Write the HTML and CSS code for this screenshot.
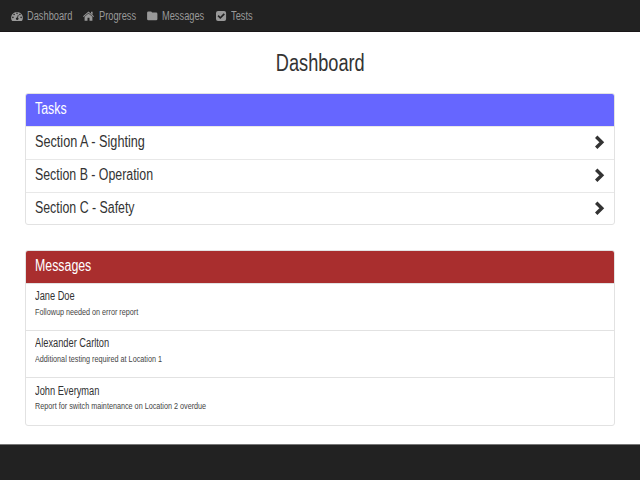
FILE: index.html
```html
<!DOCTYPE html>
<html lang="en">
<head>
<meta charset="utf-8">
<title>Dashboard</title>
<link rel="stylesheet" href="styles.css">
</head>
<body>
<nav class="navbar">
  <a class="nav-item nav-dashboard"><svg class="icon" viewBox="0 0 12 12"><path fill-rule="evenodd" d="M.8 10.6A5.9 5.9 0 1 1 11.2 10.6Q11 10.9 10.6 10.9H1.4Q1 10.9.8 10.6zM1.1 7.4a.8.8 0 1 0 1.6 0a.8.8 0 1 0-1.6 0M2.3 4.5a.8.8 0 1 0 1.6 0a.8.8 0 1 0-1.6 0M5.2 3.2a.8.8 0 1 0 1.6 0a.8.8 0 1 0-1.6 0M8.1 4.5a.8.8 0 1 0 1.6 0a.8.8 0 1 0-1.6 0M9.3 7.4a.8.8 0 1 0 1.6 0a.8.8 0 1 0-1.6 0M6.9 4.8L6.2 7.4A1.25 1.25 0 1 0 7 7.7L7.6 5z"/></svg><span class="text">Dashboard</span></a>
  <a class="nav-item nav-progress"><svg class="icon" viewBox="0 0 12 12"><path d="M5.5 1.4L11 6.3 10.4 7 5.5 2.8 .6 7 0 6.3zM8 1.7h1.6v3L8 3.3zM1.6 6.8L5.5 3.4 9.4 6.8v4H6.5V7.7h-2v3.1H1.6z"/></svg><span class="text">Progress</span></a>
  <a class="nav-item nav-messages"><svg class="icon" viewBox="0 0 12 12"><path d="M.1 2.8Q.1 1.4 1.4 1.4H3.7Q4.9 1.4 5 2.6H9.1Q10.4 2.6 10.4 3.9V9.1Q10.4 10.3 9.1 10.3H1.4Q.1 10.3.1 9.1z"/></svg><span class="text">Messages</span></a>
  <a class="nav-item nav-tests"><svg class="icon" viewBox="0 0 12 12"><path fill-rule="evenodd" d="M2 1H8.1Q10.1 1 10.1 3V9Q10.1 11 8.1 11H2Q0 11 0 9V3Q0 1 2 1zM4.3 9.1L8.9 4.5 7.7 3.3 4.3 6.7 2.7 5.1 1.5 6.3z"/></svg><span class="text">Tests</span></a>
</nav>
<main class="content">
  <h1 class="title"><span class="text">Dashboard</span></h1>
  <section class="panel tasks">
    <h2 class="heading"><span class="text">Tasks</span></h2>
    <div class="task"><span class="text task-a">Section A - Sighting</span><svg class="chevron" viewBox="0 0 10 14"><path d="M1.2 1.8L6.8 7.3 1.2 12.8"/></svg></div>
    <div class="task"><span class="text">Section B - Operation</span><svg class="chevron" viewBox="0 0 10 14"><path d="M1.2 1.8L6.8 7.3 1.2 12.8"/></svg></div>
    <div class="task"><span class="text">Section C - Safety</span><svg class="chevron" viewBox="0 0 10 14"><path d="M1.2 1.8L6.8 7.3 1.2 12.8"/></svg></div>
  </section>
  <section class="panel messages">
    <h2 class="heading"><span class="text">Messages</span></h2>
    <div class="message"><h3><span class="text">Jane Doe</span></h3><p><span class="text">Followup needed on error report</span></p></div>
    <div class="message"><h3><span class="text">Alexander Carlton</span></h3><p><span class="text">Additional testing required at Location 1</span></p></div>
    <div class="message"><h3><span class="text">John Everyman</span></h3><p><span class="text">Report for switch maintenance on Location 2 overdue</span></p></div>
  </section>
</main>
<footer class="footer"></footer>
</body>
</html>
```
FILE: styles.css
```css
* { box-sizing: border-box; }
html, body { margin: 0; height: 100%; }
body {
  display: flex;
  flex-direction: column;
  overflow: hidden;
  background: #fff;
  color: #333;
  font-family: "Liberation Sans", sans-serif;
}
h1, h2, h3, p { margin: 0; font-weight: 400; }
.text { display: inline-block; white-space: nowrap; transform: scaleX(.772); transform-origin: 0 50%; }
.navbar {
  display: flex;
  height: 32px;
  padding-left: 11px;
  background: #222;
  border-bottom: 1px solid #1a1719;
  color: #999;
  font-size: 12px;
  line-height: 33px;
}
.nav-item { display: flex; align-items: center; gap: 4px; height: 32px; }
.nav-dashboard { width: 72px; }
.nav-progress { width: 64px; }
.nav-messages { width: 69px; }
.nav-messages .text, .nav-tests .text { margin-left: -1px; }
.icon { width: 12px; height: 12px; fill: #999; flex: none; }
.content { flex: 1; padding: 0 25px; }
.title { height: 61px; font-size: 23px; line-height: 62px; text-align: center; }
.title .text { transform: scaleX(.79); transform-origin: 50% 50%; }
.panel { border: 1px solid #e2e2e2; border-radius: 3px; overflow: hidden; }
.tasks { height: 132px; margin-bottom: 25px; }
.messages { height: 176px; }
.heading { height: 32px; padding-left: 9px; color: #fff; font-size: 16px; line-height: 30px; }
.tasks .heading { background: #66f; }
.messages .heading { height: 31.5px; background: #a92e2e; }
.task {
  display: flex;
  align-items: center;
  justify-content: space-between;
  height: 33px;
  padding: 0 9px 2px;
  border-top: 1px solid #e8e8e8;
  font-size: 16px;
  line-height: 30px;
}
.task .task-a { transform: scaleX(.792); }
.chevron { width: 10px; height: 14px; fill: none; stroke: #333; stroke-width: 3.4; }
.message { height: 47.4px; padding: 5.5px 9px 0; border-top: 1px solid #e2e2e2; }
.message h3 { height: 15px; font-size: 12px; line-height: 15px; }
.message p { height: 12px; margin-top: 1.5px; font-size: 9px; line-height: 12px; color: #444; }
.message p .text { transform: scaleX(.803); }
.footer { height: 36px; background: #222; border-top: 1px solid #777; }
```
